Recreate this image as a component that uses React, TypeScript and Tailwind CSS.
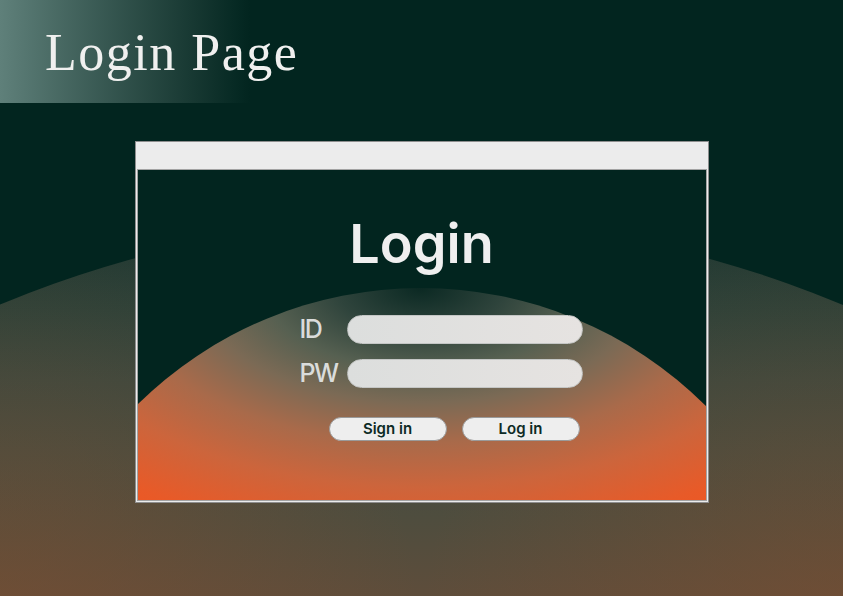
const fieldRows = [
  { label: "ID" },
  { label: "PW" },
];

export default function App() {
  return (
    <div className="relative h-[596px] w-[843px] overflow-hidden bg-[#02251f] font-['Inter',sans-serif]">
      {/* big backdrop circle */}
      <div className="absolute left-[-669px] top-[220px] h-[2180px] w-[2180px] rounded-full bg-[radial-gradient(circle_420px_at_669px_410px,rgba(125,78,48,0.55),rgba(125,78,48,0)),radial-gradient(circle_420px_at_1512px_410px,rgba(125,78,48,0.55),rgba(125,78,48,0)),linear-gradient(to_bottom,#1c3630_0px,#2a4139_90px,#38483f_160px,#444c40_230px,#4f4d3e_300px,#5e4d3b_376px,#6a4c36_500px)]" />

      <header className="relative h-[103px] w-[250px] bg-gradient-to-r from-[#5f807a] to-[#02251f] pl-[45px] pt-[27px]">
        <h1 className="whitespace-nowrap font-['Liberation_Serif',serif] text-[52px] font-normal leading-none tracking-[1.5px] text-[#f0f0ef]">
          Login Page
        </h1>
      </header>

      <div className="relative mt-[38px] flex justify-center">
        <div className="flex h-[362px] w-[574px] flex-col border border-[#8e8e8e] bg-[#ececec]">
          <div className="h-[27px] shrink-0" />
          <div className="relative mx-px mb-px flex-1 overflow-hidden border border-[#a3a3a3] bg-[#02251f]">
            <div className="absolute left-[-120px] top-[118px] h-[806px] w-[806px] rounded-full bg-[radial-gradient(ellipse_600px_310px_at_403px_0px,#0b2923_0%,#2f443c_14%,#566051_26%,#7b6a55_37%,#a96a4a_50%,#cc653c_64%,#e85a28_80%,#f15520_92%)]" />

            <div className="relative flex flex-col">
              <h2 className="mt-[47px] text-center text-[54px] font-semibold leading-none text-[#efefef]">
                Login
              </h2>

              <div className="ml-[162px] mt-[44px] flex flex-col gap-[15px]">
                {fieldRows.map((row) => (
                  <div key={row.label} className="flex items-center">
                    <span className="w-[47px] text-[25px] font-medium leading-none tracking-[-1.5px] text-[#dadcdb]">
                      {row.label}
                    </span>
                    <div className="h-[29px] w-[236px] rounded-full border border-[#c4c6c5] bg-gradient-to-r from-[#dcdedd] to-[#e6e3e1]" />
                  </div>
                ))}
              </div>

              <div className="ml-[191px] mt-[29px] flex gap-[15px]">
                <button className="flex h-[24px] w-[118px] items-center justify-center rounded-full border border-[#9a9a9a] bg-[#eeeeee] text-[15px] font-semibold text-[#0d2a25]">
                  Sign in
                </button>
                <button className="flex h-[24px] w-[118px] items-center justify-center rounded-full border border-[#9a9a9a] bg-[#eeeeee] text-[15px] font-semibold text-[#0d2a25]">
                  Log in
                </button>
              </div>
            </div>
          </div>
        </div>
      </div>
    </div>
  );
}
